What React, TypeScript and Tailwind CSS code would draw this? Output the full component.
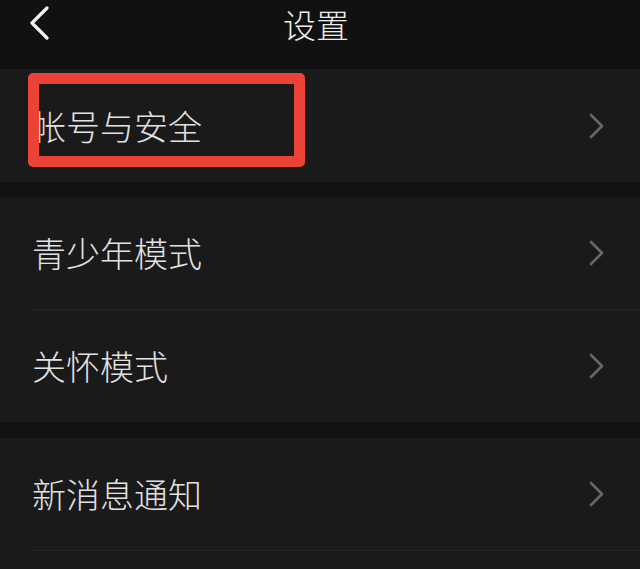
const cjk = { fontFamily: '"Noto Sans CJK SC", "Noto Sans", sans-serif' };

function Chevron() {
  return (
    <svg width="17" height="26" viewBox="0 0 17 26" fill="none" className="shrink-0">
      <path d="M3 2 L14 13 L3 24" stroke="#686868" strokeWidth="2.6" strokeLinecap="round" strokeLinejoin="round" />
    </svg>
  );
}

function Row({ label }: { label: string }) {
  return (
    <div className="h-[112px] flex items-center justify-between pl-8 pr-[35px]">
      <span className="text-[34px] leading-none font-light text-[#e2e2e2]" style={cjk}>
        {label}
      </span>
      <Chevron />
    </div>
  );
}

function Divider() {
  return <div className="ml-8 h-px bg-[#262626]" />;
}

export default function App() {
  return (
    <div className="w-[640px] h-[569px] overflow-hidden bg-[#121212]" style={cjk}>
      <header className="h-[69px] bg-[#111111] flex items-start pt-[6px]">
        <div className="w-[80px] pl-[28px]">
          <svg width="24" height="34" viewBox="0 0 24 34" fill="none">
            <path d="M19 2 L4 17 L19 32" stroke="#f2f2f2" strokeWidth="3.2" strokeLinecap="round" strokeLinejoin="round" />
          </svg>
        </div>
        <h1 className="flex-1 text-center text-[33px] leading-none pt-[2px] pr-2 text-[#ececec] font-light">设置</h1>
        <div className="w-[80px]" />
      </header>

      <section className="relative bg-[#1a1a1a] h-[113px] flex flex-col justify-center">
        <Row label="帐号与安全" />
        <div className="absolute left-[28px] top-[4px] w-[277px] h-[94px] border-[11px] border-[#ec4338] rounded-[5px]" />
      </section>

      <div className="h-[15px]" />

      <section className="bg-[#1a1a1a]">
        <Row label="青少年模式" />
        <Divider />
        <Row label="关怀模式" />
      </section>

      <div className="h-[16px]" />

      <section className="bg-[#1a1a1a]">
        <Row label="新消息通知" />
        <Divider />
        <div className="h-[40px]" />
      </section>
    </div>
  );
}
